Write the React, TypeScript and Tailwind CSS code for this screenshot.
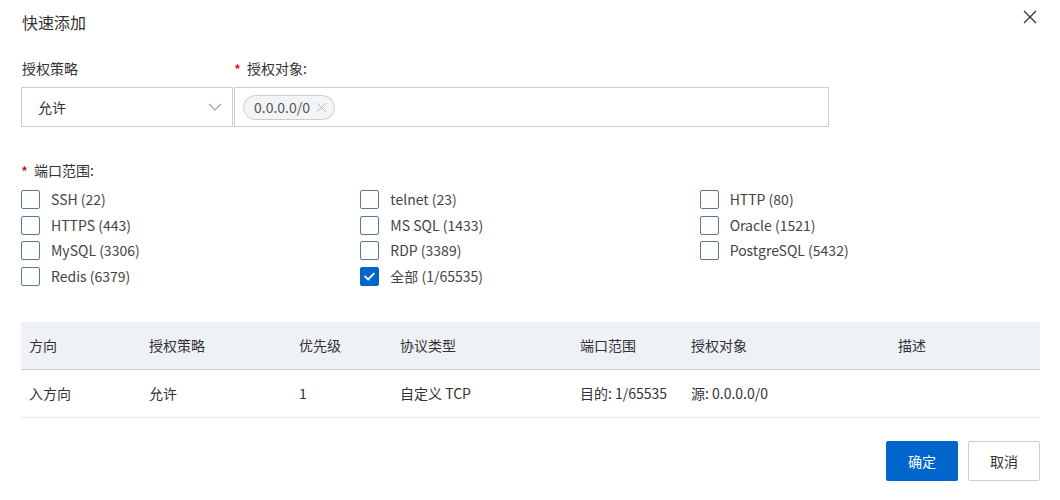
import React, { useState } from 'react';

const FONT = '"Noto Sans CJK SC", "Noto Sans", sans-serif';

const ports = [
  ['SSH (22)', 'telnet (23)', 'HTTP (80)'],
  ['HTTPS (443)', 'MS SQL (1433)', 'Oracle (1521)'],
  ['MySQL (3306)', 'RDP (3389)', 'PostgreSQL (5432)'],
  ['Redis (6379)', '全部 (1/65535)', null],
];

const columns = ['方向', '授权策略', '优先级', '协议类型', '端口范围', '授权对象', '描述'];
const colWidths = ['w-[120px]', 'w-[150px]', 'w-[101px]', 'w-[180px]', 'w-[111px]', 'w-[207px]', 'flex-1'];
const row = ['入方向', '允许', '1', '自定义 TCP', '目的: 1/65535', '源: 0.0.0.0/0', ''];

const Required = () => (
  <span className="text-[#cc0000] mr-[6px] text-[15px] relative top-[2px]">*</span>
);

const Checkbox: React.FC<{ label: string; checked: boolean; onToggle: () => void }> = ({ label, checked, onToggle }) => (
  <label className="flex items-center h-[19px] cursor-pointer" onClick={onToggle}>
    <span
      className={`w-[19px] h-[19px] rounded-[2px] border flex items-center justify-center ${
        checked ? 'bg-[#0066cc] border-[#0066cc]' : 'bg-white border-[#5b7899]'
      }`}
    >
      {checked && (
        <svg className="w-[13px] h-[13px]" viewBox="0 0 14 14" fill="none" stroke="white" strokeWidth="2">
          <path d="M2.5 7.2l3 3 6-6.2" strokeLinecap="square" />
        </svg>
      )}
    </span>
    <span className="ml-[11px] text-[14px] text-[#444]">{label}</span>
  </label>
);

export default function App() {
  const [checked, setChecked] = useState<string[]>(['全部 (1/65535)']);
  const toggle = (p: string) =>
    setChecked(c => (c.includes(p) ? c.filter(x => x !== p) : [...c, p]));

  return (
    <div className="w-[1060px] h-[500px] bg-white relative px-[21px] text-[#333]" style={{ fontFamily: FONT }}>
      {/* Header */}
      <div className="h-[44px] flex items-center pl-[1px]">
        <span className="text-[16px] text-[#333]">快速添加</span>
      </div>
      <button className="absolute right-[23px] top-[10px] w-[14px] h-[14px] text-[#333]">
        <svg viewBox="0 0 14 14" className="w-[14px] h-[14px]" stroke="currentColor" strokeWidth="1.3" fill="none">
          <path d="M1 1l12 12M13 1L1 13" />
        </svg>
      </button>

      {/* Policy + target */}
      <div className="flex mt-[12px]">
        <div className="flex flex-col w-[212px]">
          <div className="h-[24px] flex items-center pl-[1px] text-[14px] text-[#333]">授权策略</div>
          <div className="mt-[7px] h-[40px] border border-[#c8ccd3] flex items-center justify-between pl-[16px] pr-[10px]">
            <span className="text-[14px] text-[#333]">允许</span>
            <svg className="w-[14px] h-[14px]" viewBox="0 0 14 14" fill="none" stroke="#9aa0a8" strokeWidth="1.1">
              <path d="M1 4l6 6 6-6" />
            </svg>
          </div>
        </div>
        <div className="flex flex-col w-[595px] ml-[1px]">
          <div className="h-[24px] flex items-center text-[14px] text-[#333]">
            <Required />授权对象:
          </div>
          <div className="mt-[7px] h-[40px] border border-[#c8ccd3] flex items-center pl-[8px]">
            <span className="h-[25px] flex items-center rounded-full border border-[#c8ccd3] bg-[#f3f4f6] pl-[10px] pr-[7px] text-[14px] text-[#555]">
              0.0.0.0/0
              <svg className="ml-[6px] w-[11px] h-[11px]" viewBox="0 0 10 10" stroke="#b4b8be" strokeWidth="0.9" fill="none">
                <path d="M1 1l8 8M9 1L1 9" />
              </svg>
            </span>
          </div>
        </div>
      </div>

      {/* Port range */}
      <div className="mt-[31px] h-[24px] flex items-center text-[14px] text-[#333]">
        <Required />端口范围:
      </div>
      <div className="mt-[8px] flex flex-col gap-[6.7px]">
        {ports.map((r, i) => (
          <div key={i} className="flex">
            {r.map((p, j) => (
              <div key={j} className="w-[340px]">
                {p && <Checkbox label={p} checked={checked.includes(p)} onToggle={() => toggle(p)} />}
              </div>
            ))}
          </div>
        ))}
      </div>

      {/* Table */}
      <div className="mt-[36px] w-[1019px] text-[14px]">
        <div className="flex h-[48px] items-center bg-[#eef1f6] border-b border-[#c9cdd4] pl-[8px] text-[#333]">
          {columns.map((c, i) => (
            <div key={c} className={colWidths[i]}>{c}</div>
          ))}
        </div>
        <div className="flex h-[48px] items-center border-b border-[#e3e5e8] pl-[8px] text-[#333]">
          {row.map((c, i) => (
            <div key={i} className={colWidths[i]}>{c}</div>
          ))}
        </div>
      </div>

      {/* Footer */}
      <div className="flex justify-end gap-[10px] mt-[23px] w-[1019px]">
        <button className="w-[72px] h-[40px] bg-[#0066cc] text-white text-[14px] rounded-[2px]">确定</button>
        <button className="w-[72px] h-[40px] bg-white border border-[#c8ccd3] text-[#333] text-[14px] rounded-[2px]">取消</button>
      </div>
    </div>
  );
}
